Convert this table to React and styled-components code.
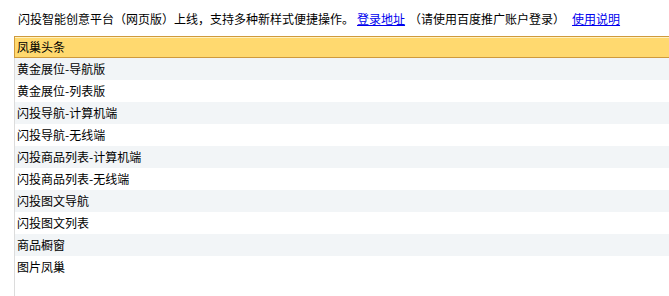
import React from "react";
import styled, { createGlobalStyle } from "styled-components";

const Global = createGlobalStyle`
  html, body { margin: 0; padding: 0; background: #fff; overflow: hidden; }
  body { font-family: "Noto Sans CJK SC", "Noto Sans", sans-serif; font-size: 12px; color: #000; }
`;

const Page = styled.div`
  display: flex;
  flex-direction: column;
  min-height: 296px;
  padding-top: 8px;
  box-sizing: border-box;
`;

const Notice = styled.div`
  padding-left: 18px;
  height: 22px;
  line-height: 22px;
  margin-bottom: 6px;
  white-space: nowrap;
  color: #000;
`;

const Link = styled.a`
  color: #0000ee;
  text-decoration: underline;
  margin: 0 ${(p) => p.$right}px 0 ${(p) => p.$left}px;
  cursor: pointer;
`;

const List = styled.ul`
  flex: 1;
  list-style: none;
  margin: 0 0 0 14px;
  padding: 0;
  border-left: 1px solid #dcdcdc;
  display: flex;
  flex-direction: column;
`;

const Row = styled.li`
  height: 22px;
  line-height: 22px;
  padding-left: 2px;
  box-sizing: border-box;
  white-space: nowrap;
  color: #000;
  background: ${(p) => (p.$alt ? "#f2f5f7" : "#fff")};
  ${(p) =>
    p.$active &&
    `
    background: #ffd96f;
    border: 1px solid #cf9a3c;
    border-right: none;
    box-shadow: inset 0 1px 0 #fff2c2;
    line-height: 20px;
    margin-left: -1px;
    padding-left: 2px;
  `}
`;

const items = [
  "凤巢头条",
  "黄金展位-导航版",
  "黄金展位-列表版",
  "闪投导航-计算机端",
  "闪投导航-无线端",
  "闪投商品列表-计算机端",
  "闪投商品列表-无线端",
  "闪投图文导航",
  "闪投图文列表",
  "商品橱窗",
  "图片凤巢",
];

export default function App() {
  return (
    <>
      <Global />
      <Page>
        <Notice>
          闪投智能创意平台（网页版）上线，支持多种新样式便捷操作。
          <Link $left={3} $right={4}>登录地址</Link>
          （请使用百度推广账户登录）
          <Link $left={7} $right={0}>使用说明</Link>
        </Notice>
        <List>
          {items.map((t, i) => (
            <Row key={t} $active={i === 0} $alt={i % 2 === 1}>
              {t}
            </Row>
          ))}
        </List>
      </Page>
    </>
  );
}
